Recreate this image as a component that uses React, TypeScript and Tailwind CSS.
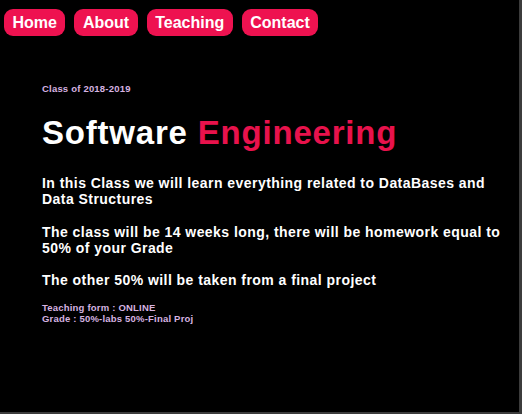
import React from "react";

const links = ["Home", "About", "Teaching", "Contact"];

export default function App() {
  return (
    <div
      className="w-[522px] h-[414px] bg-black border-r-[3px] border-b-[2px] border-[#3c3c3c] overflow-hidden"
      style={{ fontFamily: '"Liberation Sans", Arial, sans-serif' }}
    >
      <nav className="flex gap-[9px] pl-[4px] pt-[9px]">
        {links.map((l) => (
          <a
            key={l}
            href="#"
            className="h-[27px] flex items-center px-[8.5px] rounded-[9px] bg-[#ee1250] text-white font-bold text-[16px] leading-none"
          >
            {l}
          </a>
        ))}
      </nav>
      <main className="pl-[42px] pr-[10px] flex flex-col">
        <p className="mt-[47px] text-[9.5px] leading-[11px] font-bold tracking-[0.2px] text-[#d6b3e0]">
          Class of 2018-2019
        </p>
        <h1 className="mt-[20px] text-[33px] leading-[37px] font-bold tracking-[0.8px] text-white">
          Software <span className="text-[#e8124c]">Engineering</span>
        </h1>
        <p className="mt-[24px] text-[14px] leading-[16px] font-bold tracking-[0.45px] text-white">
          In this Class we will learn everything related to DataBases and Data Structures
        </p>
        <p className="mt-[17px] text-[14px] leading-[16px] font-bold tracking-[0.45px] text-white">
          The class will be 14 weeks long, there will be homework equal to 50% of your Grade
        </p>
        <p className="mt-[16px] text-[14px] leading-[16px] font-bold tracking-[0.45px] text-white">
          The other 50% will be taken from a final project
        </p>
        <div className="mt-[14px] text-[9.5px] leading-[11px] font-bold tracking-[0.2px] text-[#d6b3e0]">
          <p>Teaching form : ONLINE</p>
          <p>Grade : 50%-labs 50%-Final Proj</p>
        </div>
      </main>
    </div>
  );
}
